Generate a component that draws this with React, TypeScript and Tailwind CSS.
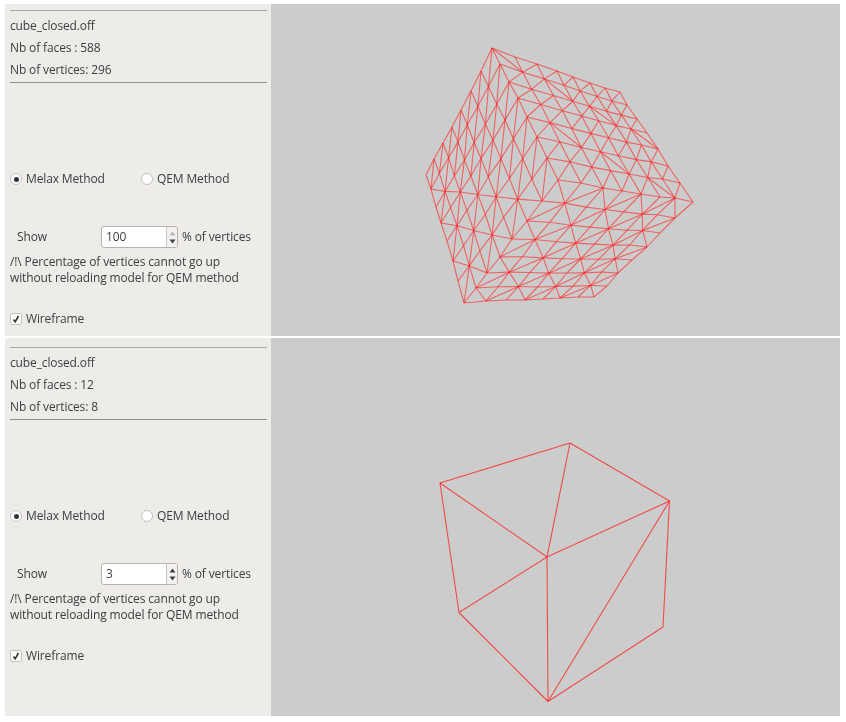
import React from "react";

type P = [number, number];
type Pick = (i: number, j: number) => boolean;

const T: P = [492, 48];
const R1: P = [620, 92];
const R: P = [693, 202];
const C: P = [558, 180];
const BR: P = [594, 297];
const BL: P = [464, 303];
const L: P = [426, 175];

const tToR1: P[] = [T, [515, 57], [537, 64], [557, 71], [573, 77], [590, 83], [605, 88], R1];
const tToC: P[] = [T, [500, 64], [509, 82], [518, 98], [527, 117], [537, 137], [547, 158], C];
const cToR: P[] = [C, [581, 183], [603, 188], [622, 191], [641, 194], [660, 197], [675, 198], R];
const r1ToR: P[] = [R1, [627, 105], [637, 119], [647, 133], [658, 149], [668, 166], [680, 183], R];
const cToBL: P[] = [C, [542, 201], [527, 221], [512, 239], [500, 257], [487, 273], [476, 288], BL];
const blToBR: P[] = [BL, [486, 301], [506, 300], [525, 300], [543, 299], [560, 298], [578, 297], BR];
const rToBR: P[] = [R, [675, 218], [660, 233], [647, 247], [632, 260], [618, 273], [607, 286], BR];
const tToL: P[] = [T, [481, 71], [471, 91], [461, 110], [452, 127], [443, 143], [434, 159], L];
const lToBL: P[] = [L, [431, 189], [436, 207], [441, 223], [447, 241], [453, 261], [458, 281], BL];

function coons(top: P[], bottom: P[], left: P[], right: P[]): P[][] {
  const n = 7;
  const out: P[][] = [];
  for (let j = 0; j <= n; j++) {
    const row: P[] = [];
    const v = j / n;
    for (let i = 0; i <= n; i++) {
      const u = i / n;
      const p: P = [0, 0];
      for (const k of [0, 1]) {
        p[k] =
          (1 - v) * top[i][k] +
          v * bottom[i][k] +
          (1 - u) * left[j][k] +
          u * right[j][k] -
          ((1 - u) * (1 - v) * top[0][k] +
            u * (1 - v) * top[n][k] +
            (1 - u) * v * bottom[0][k] +
            u * v * bottom[n][k]);
      }
      row.push(p);
    }
    out.push(row);
  }
  return out;
}

function edges(g: P[][], mainDiagonal: Pick): [P, P][] {
  const e: [P, P][] = [];
  const n = g.length - 1;
  for (let j = 0; j <= n; j++) {
    for (let i = 0; i <= n; i++) {
      if (i < n) e.push([g[j][i], g[j][i + 1]]);
      if (j < n) e.push([g[j][i], g[j + 1][i]]);
      if (i < n && j < n) {
        if (mainDiagonal(i, j)) e.push([g[j][i], g[j + 1][i + 1]]);
        else e.push([g[j][i + 1], g[j + 1][i]]);
      }
    }
  }
  return e;
}

function dedupe(list: [P, P][]): [P, P][] {
  const seen = new Set<string>();
  return list.filter(([a, b]) => {
    const ka = `${a[0].toFixed(1)},${a[1].toFixed(1)}`;
    const kb = `${b[0].toFixed(1)},${b[1].toFixed(1)}`;
    const key = ka < kb ? `${ka}|${kb}` : `${kb}|${ka}`;
    if (seen.has(key)) return false;
    seen.add(key);
    return true;
  });
}

const denseEdges = dedupe([
  ...edges(coons(tToR1, cToR, tToC, r1ToR), (i, j) => (i * 3 + j) % 7 === 0),
  ...edges(coons(cToR, blToBR, cToBL, rToBR), (i, j) => (i + j) % 2 === 0),
  ...edges(coons(tToC, lToBL, tToL, cToBL), (i, j) => i + j < 6 || (i + j) % 2 === 0),
]);

const sparse: [P, P][] = (() => {
  const t: P = [570, 443];
  const l: P = [440, 483];
  const r: P = [669.5, 501];
  const c: P = [547, 557];
  const ll: P = [459, 612.5];
  const b: P = [548, 701.5];
  const lr: P = [663, 627];
  return [
    [t, l], [t, r], [t, c], [l, c], [r, c], [l, ll], [ll, c], [ll, b], [c, b], [b, r], [b, lr], [lr, r],
  ];
})();

const font = { fontFamily: '"Open Sans", "Noto Sans", sans-serif' };

function Stepper({ value, upDisabled }: { value: string; upDisabled: boolean }) {
  return (
    <div className="flex h-[22px] w-[77px] overflow-hidden rounded-[3px] border border-[#b6b3ad] bg-white">
      <div className="flex flex-1 items-center pl-[4px]">{value}</div>
      <div className="flex w-[11px] flex-col items-center justify-center gap-[3px] border-l border-[#c8c5bf] bg-[#f2f1ef]">
        <svg width="7" height="5" viewBox="0 0 7 5">
          <path d="M3.5 0.5 L6.5 4.5 L0.5 4.5 Z" fill={upDisabled ? "#b8b8b6" : "#3a3f41"} />
        </svg>
        <svg width="7" height="5" viewBox="0 0 7 5">
          <path d="M0.5 0.5 L6.5 0.5 L3.5 4.5 Z" fill="#3a3f41" />
        </svg>
      </div>
    </div>
  );
}

function Radio({ checked }: { checked: boolean }) {
  return (
    <span className="flex h-[12px] w-[12px] shrink-0 items-center justify-center rounded-full border border-[#c4c1bb] bg-white">
      {checked && <span className="h-[5px] w-[5px] rounded-full bg-[#2e3436]" />}
    </span>
  );
}

function Side({ faces, verts, value, upDisabled, top }: { faces: string; verts: string; value: string; upDisabled: boolean; top: string }) {
  return (
    <div className={`flex h-full w-[266px] shrink-0 flex-col bg-[#eeece8] pl-[5px] pr-[4px] text-[12px] tracking-[-0.13px] text-[#3a4042] ${top}`} style={font}>
      <div className="h-px w-full bg-[#a9a8a4]" />
      <div className="mt-[4px] flex h-[22px] items-center">cube_closed.off</div>
      <div className="flex h-[22px] items-center">Nb of faces : {faces}</div>
      <div className="flex h-[21px] items-center">Nb of vertices: {verts}</div>
      <div className="mt-[2px] h-px w-full bg-[#8f8f8b]" />
      <div className="mt-[86px] flex h-[20px] items-center">
        <Radio checked />
        <span className="ml-[4px] w-[115px]">Melax Method</span>
        <Radio checked={false} />
        <span className="ml-[4px]">QEM Method</span>
      </div>
      <div className="mt-[37px] flex h-[22px] items-center">
        <span className="ml-[7px] w-[84px]">Show</span>
        <Stepper value={value} upDisabled={upDisabled} />
        <span className="ml-[4px]">% of vertices</span>
      </div>
      <div className="mt-[6px] text-[12px] leading-[16px]">
        <div>/!\ Percentage of vertices cannot go up</div>
        <div>without reloading model for QEM method</div>
      </div>
      <div className="mt-[25px] flex h-[16px] items-center">
        <span className="flex h-[12px] w-[12px] items-center justify-center rounded-[2px] border border-[#c4c1bb] bg-white">
          <svg width="8" height="8" viewBox="0 0 8 8">
            <path d="M1.5 4.5 L3.2 6.8 L6.5 1" fill="none" stroke="#2e3436" strokeWidth="1.6" />
          </svg>
        </span>
        <span className="ml-[4px]">Wireframe</span>
      </div>
    </div>
  );
}

function Mesh({ box, lines, opacity }: { box: string; lines: [P, P][]; opacity: number }) {
  return (
    <svg viewBox={box} className="block h-full w-full">
      {lines.map(([a, b], i) => (
        <line key={i} x1={a[0]} y1={a[1]} x2={b[0]} y2={b[1]} stroke="#ff2020" strokeWidth={1.1} strokeOpacity={opacity} />
      ))}
    </svg>
  );
}

export default function App() {
  return (
    <div className="flex h-[722px] w-[846px] flex-col gap-[2px] bg-white pb-[6px] pl-[5px] pr-[6px] pt-[4px] blur-[0.35px]">
      <div className="flex h-[332px]">
        <Side faces="588" verts="296" value="100" upDisabled top="pt-[6px]" />
        <div className="flex-1 bg-[#cccccc]">
          <Mesh box="271 4 569 332" lines={denseEdges} opacity={0.6} />
        </div>
      </div>
      <div className="flex h-[378px]">
        <Side faces="12" verts="8" value="3" upDisabled={false} top="pt-[9px]" />
        <div className="flex-1 bg-[#cccccc]">
          <Mesh box="271 338 569 378" lines={sparse} opacity={0.75} />
        </div>
      </div>
    </div>
  );
}
